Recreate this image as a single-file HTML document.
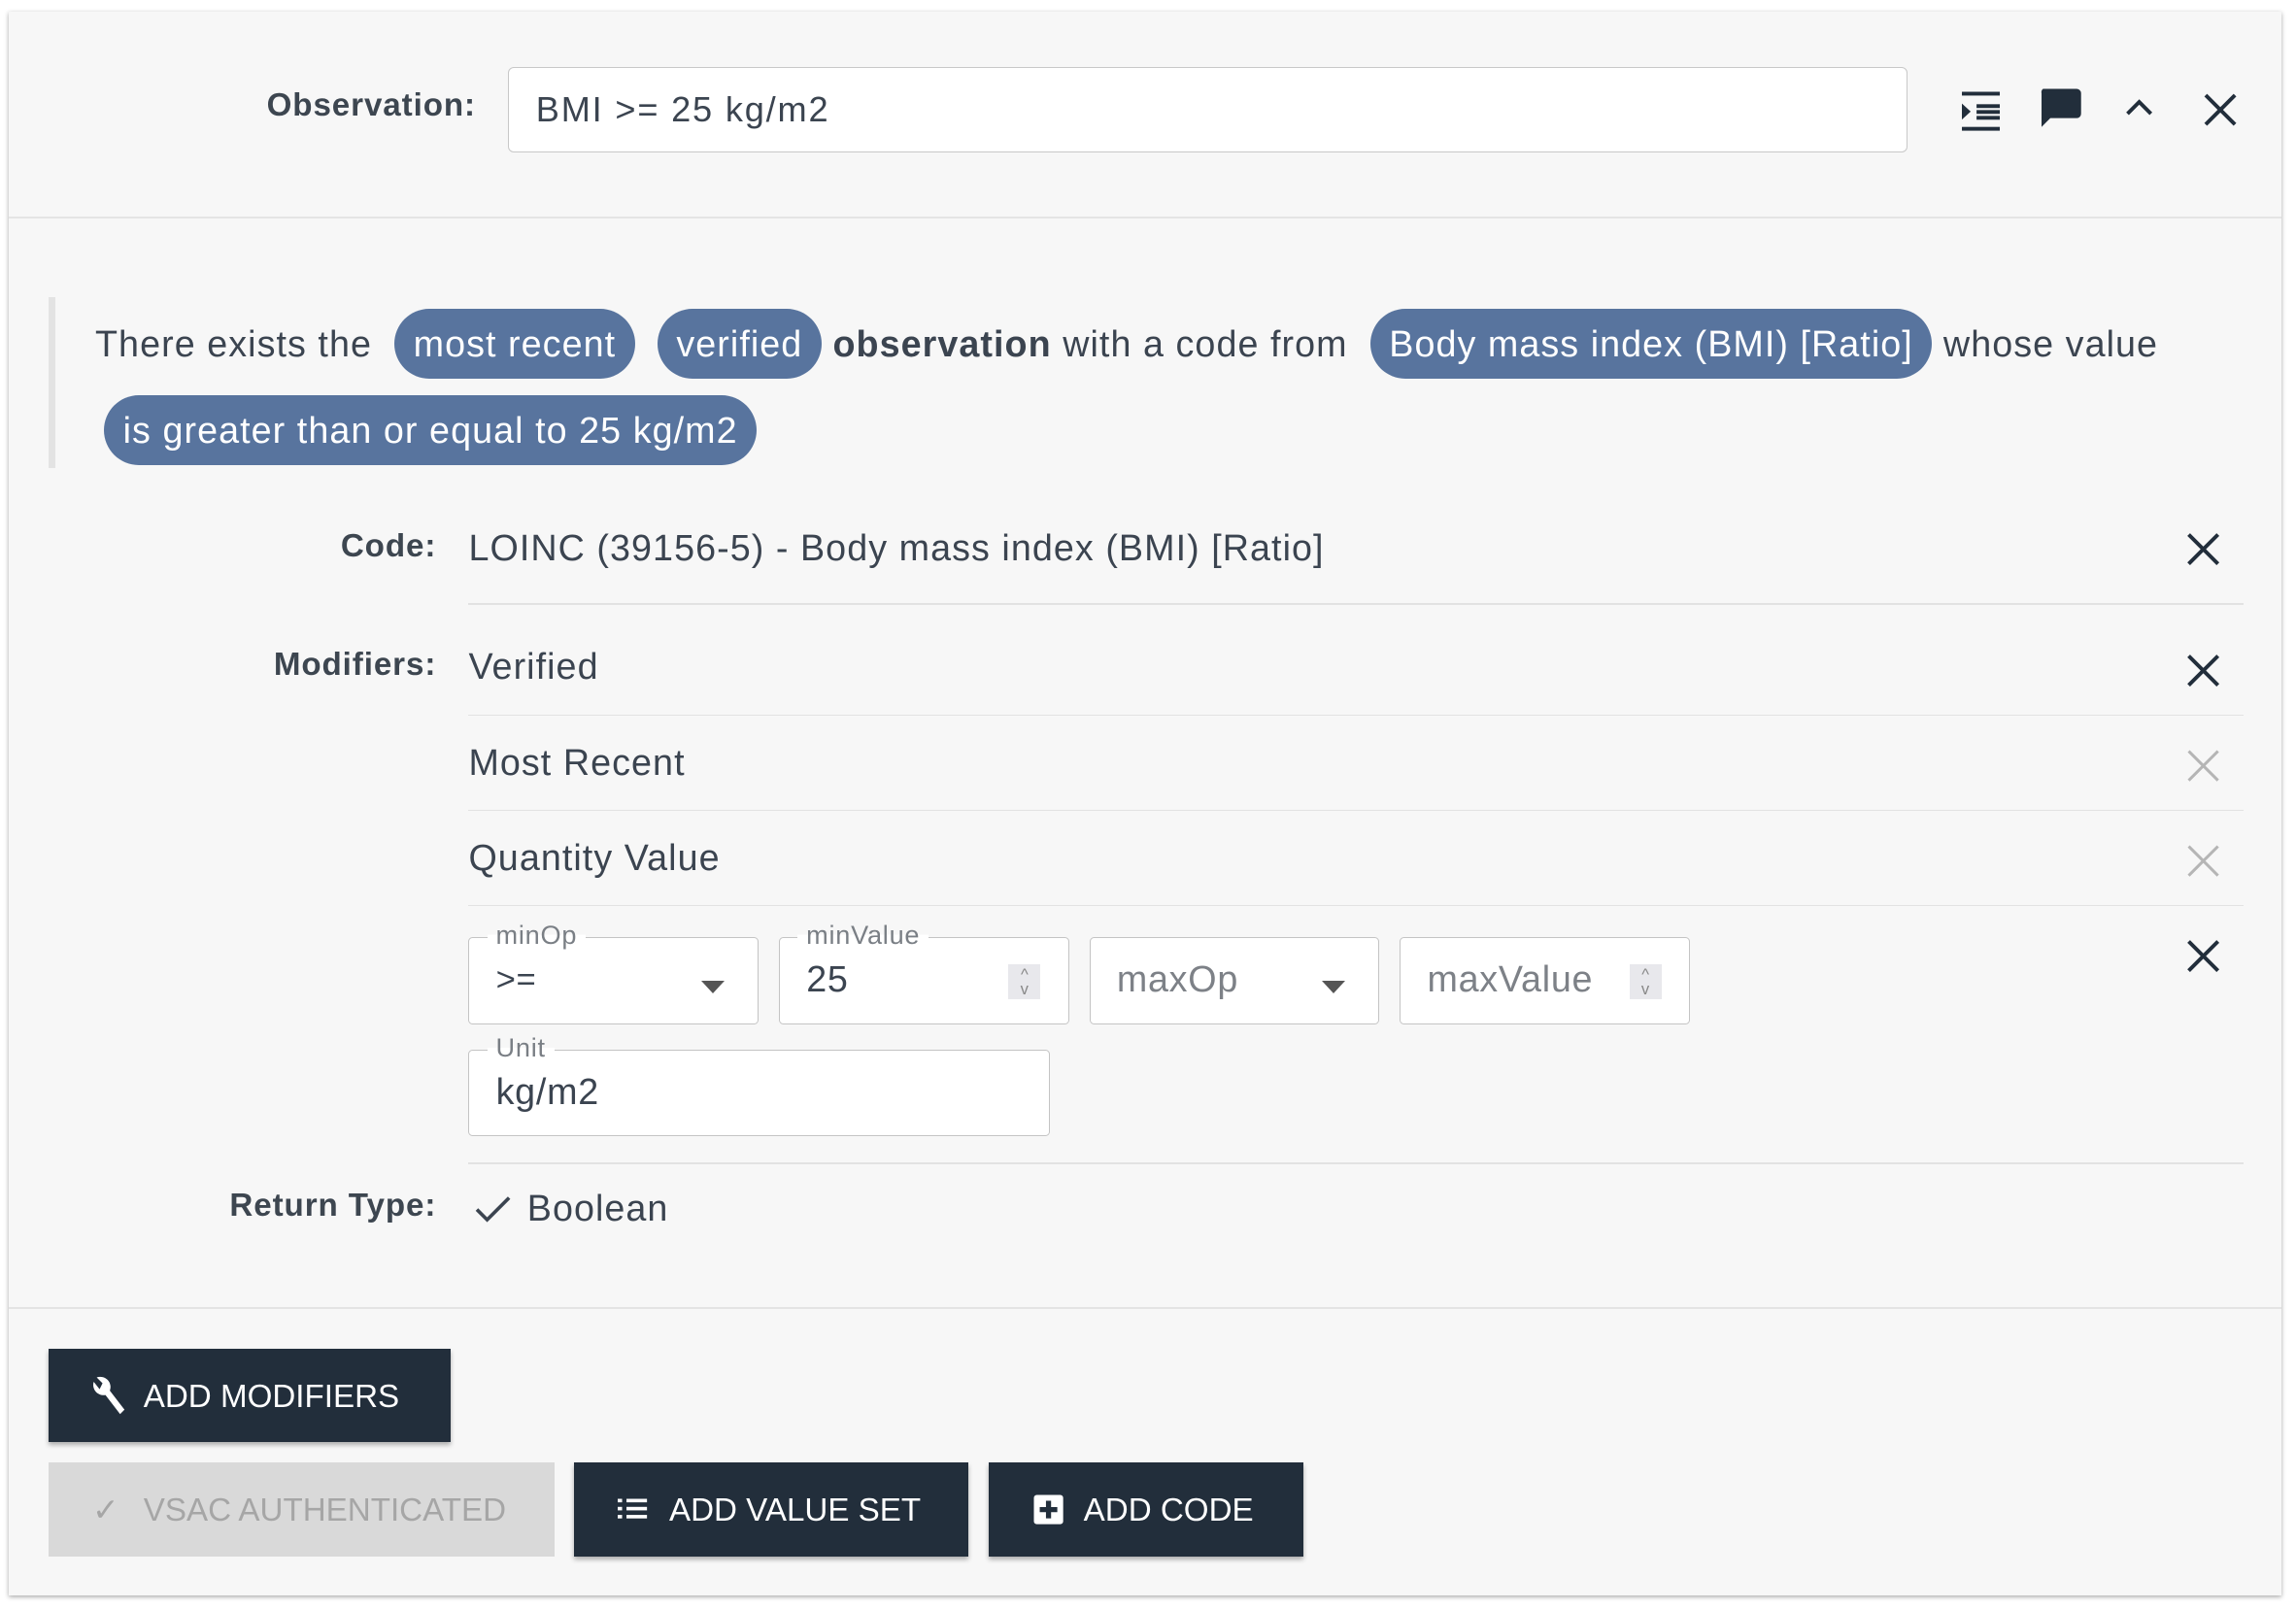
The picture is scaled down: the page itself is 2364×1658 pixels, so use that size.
<!DOCTYPE html>
<html><head><meta charset="utf-8"><style>
*{box-sizing:border-box;margin:0;padding:0}
html,body{width:2364px;height:1658px;background:#fff;overflow:hidden}
#w{zoom:1.50765;width:1568px;height:1100px;position:relative;font-family:"Liberation Sans",sans-serif;color:#3b4450}
.a{position:absolute}
.card{left:6px;top:8px;width:1552px;height:1082px;background:#f7f7f7;box-shadow:0 1px 3px rgba(0,0,0,.35)}
.lbl{position:absolute;text-align:right;font-weight:bold;font-size:22px;color:#3d4650;white-space:nowrap;letter-spacing:0.6px}
.txt{position:absolute;font-size:25px;color:#3b4450;white-space:nowrap;letter-spacing:0.7px}
.pill{display:inline-block;background:#58749e;color:#fff;border-radius:24px;padding:0 13px;height:48px;line-height:48px}
.hr{position:absolute;left:320px;width:1212px;height:1px;background:#e2e2e2}
.x{position:absolute;width:22px;height:22px}
.f{position:absolute;background:#fff;border:1px solid #c4c4c4;border-radius:3px;height:60px}
.fl{position:absolute;top:-13px;left:12px;padding:0 6px;font-size:18px;color:#7a7f85;line-height:22px;background:linear-gradient(#f7f7f7 50%,#fff 50%);letter-spacing:0.5px}
.fv{position:absolute;left:18px;top:14px;font-size:25px;letter-spacing:0.5px}
.btn{position:absolute;background:#222e3b;color:#fff;font-size:22px;height:64px;line-height:66px;box-shadow:0 2px 3px rgba(0,0,0,.3);white-space:nowrap}
</style></head><body><div id="w">
<div class="a card"></div>
<div class="a" style="left:6px;top:148px;width:1552px;height:1px;background:#e4e4e4"></div>
<div class="lbl" style="right:1243px;top:60px">Observation:</div>
<div class="a" style="left:347px;top:46px;width:956px;height:58px;background:#fff;border:1px solid #c8c8c8;border-radius:4px"></div>
<div class="txt" style="left:366px;top:61px;font-size:24px;letter-spacing:1.2px">BMI &gt;= 25 kg/m2</div>
<svg class="a" style="left:1338px;top:62px" width="28" height="28" viewBox="0 0 28 28" fill="#222e3b"><rect x="2" y="1" width="26" height="2.6"/><rect x="12" y="9.5" width="16" height="2.6"/><rect x="12" y="17.5" width="16" height="2.6"/><rect x="12" y="13.5" width="16" height="2.6"/><rect x="2" y="25" width="26" height="2.6"/><path d="M2 9v11l6-5.5z"/></svg>
<svg class="a" style="left:1392px;top:60px" width="30" height="32" viewBox="0 0 30 32"><path d="M3 1h23a3 3 0 0 1 3 3v14a3 3 0 0 1-3 3H8l-6 6V4a3 3 0 0 1 1-3z" fill="#222e3b"/></svg>
<svg class="a" style="left:1450px;top:64px" width="22" height="18" viewBox="0 0 22 18"><path d="M3 14l8-8 8 8" stroke="#222e3b" stroke-width="2.6" fill="none"/></svg>
<svg class="a" style="left:1504px;top:63px" width="24" height="24" viewBox="0 0 24 24"><path d="M2 2l20 20M22 2L2 22" stroke="#222e3b" stroke-width="2.6"/></svg>

<div class="a" style="left:33px;top:203px;width:5px;height:117px;background:#e3e3e3"></div>
<div class="txt" style="left:65px;top:211px;line-height:48px">There exists the&nbsp; <span class="pill">most recent</span>&nbsp; <span class="pill">verified</span> <b>observation</b> with a code from&nbsp; <span class="pill">Body mass index (BMI) [Ratio]</span> whose value</div>
<div class="txt" style="left:71px;top:270px;line-height:48px"><span class="pill">is greater than or equal to 25 kg/m2</span></div>

<div class="lbl" style="right:1270px;top:361px">Code:</div>
<div class="txt" style="left:320px;top:360px">LOINC (39156-5) - Body mass index (BMI) [Ratio]</div>
<div class="hr" style="top:412px"></div>
<div class="lbl" style="right:1270px;top:442px">Modifiers:</div>
<div class="txt" style="left:320px;top:441px">Verified</div>
<div class="hr" style="top:488px"></div>
<div class="txt" style="left:320px;top:507px">Most Recent</div>
<div class="hr" style="top:553px"></div>
<div class="txt" style="left:320px;top:572px">Quantity Value</div>
<div class="hr" style="top:618px"></div>
<svg class="x" style="left:1494px;top:364px" viewBox="0 0 22 22"><path d="M1 1l20 20M21 1L1 21" stroke="#222e3b" stroke-width="2.6"/></svg>
<svg class="x" style="left:1494px;top:447px" viewBox="0 0 22 22"><path d="M1 1l20 20M21 1L1 21" stroke="#222e3b" stroke-width="2.6"/></svg>
<svg class="x" style="left:1494px;top:512px" viewBox="0 0 22 22"><path d="M1 1l20 20M21 1L1 21" stroke="#b5b5b5" stroke-width="2"/></svg>
<svg class="x" style="left:1494px;top:577px" viewBox="0 0 22 22"><path d="M1 1l20 20M21 1L1 21" stroke="#b5b5b5" stroke-width="2"/></svg>
<svg class="x" style="left:1494px;top:642px" viewBox="0 0 22 22"><path d="M1 1l20 20M21 1L1 21" stroke="#222e3b" stroke-width="2.6"/></svg>

<div class="f" style="left:320px;top:640px;width:198px"><div class="fl">minOp</div><div class="fv" style="top:16px;font-size:23px">&gt;=</div><div class="a" style="left:158px;top:29px;border:8px solid transparent;border-top:9px solid #555;border-bottom:0"></div></div>
<div class="f" style="left:532px;top:640px;width:198px"><div class="fl">minValue</div><div class="fv">25</div><div class="a" style="left:156px;top:18px;width:22px;height:24px;background:#e8e8ec;color:#888;font-size:11px;line-height:10px;text-align:center;padding-top:2px">^<br>v</div></div>
<div class="f" style="left:744px;top:640px;width:198px"><div class="fv" style="color:#7d8187">maxOp</div><div class="a" style="left:158px;top:29px;border:8px solid transparent;border-top:9px solid #555;border-bottom:0"></div></div>
<div class="f" style="left:956px;top:640px;width:198px"><div class="fv" style="color:#7d8187">maxValue</div><div class="a" style="left:156px;top:18px;width:22px;height:24px;background:#e8e8ec;color:#888;font-size:11px;line-height:10px;text-align:center;padding-top:2px">^<br>v</div></div>
<div class="f" style="left:320px;top:717px;width:397px;height:59px"><div class="fl">Unit</div><div class="fv">kg/m2</div></div>
<div class="hr" style="top:794px"></div>
<div class="lbl" style="right:1270px;top:811px">Return Type:</div>
<svg class="a" style="left:324px;top:815px" width="26" height="22" viewBox="0 0 26 22"><path d="M2 11l7 7L24 3" stroke="#3b4450" stroke-width="2.4" fill="none"/></svg>
<div class="txt" style="left:360px;top:811px">Boolean</div>

<div class="a" style="left:6px;top:893px;width:1552px;height:1px;background:#e4e4e4"></div>
<div class="btn" style="left:33px;top:921px;width:275px"><svg class="a" style="left:28px;top:19px" width="26" height="28" viewBox="0 0 26 28"><path d="M3 4a7 7 0 0 0 8 9l10 13 3-3-10-13a7 7 0 0 0-9-9l4 4-2 4z" fill="#fff"/></svg><span style="position:absolute;left:65px">ADD MODIFIERS</span></div>
<div class="btn" style="left:33px;top:999px;width:346px;background:#d9d9d9;color:#a6a6a6;box-shadow:none"><span style="position:absolute;left:30px">✓</span><span style="position:absolute;left:65px">VSAC AUTHENTICATED</span></div>
<div class="btn" style="left:392px;top:999px;width:269px"><svg class="a" style="left:30px;top:24px" width="22" height="16" viewBox="0 0 22 16" fill="#fff"><rect x="0" y="1" width="3" height="2.4"/><rect x="6" y="1" width="14" height="2.4"/><rect x="0" y="6.5" width="3" height="2.4"/><rect x="6" y="6.5" width="14" height="2.4"/><rect x="0" y="12" width="3" height="2.4"/><rect x="6" y="12" width="14" height="2.4"/></svg><span style="position:absolute;left:65px">ADD VALUE SET</span></div>
<div class="btn" style="left:675px;top:999px;width:215px"><svg class="a" style="left:30px;top:21px" width="22" height="22" viewBox="0 0 22 22"><rect x="1" y="1" width="20" height="20" rx="2" fill="#fff"/><path d="M11 5v12M5 11h12" stroke="#222e3b" stroke-width="3.5"/></svg><span style="position:absolute;left:65px">ADD CODE</span></div>
</div></body></html>
